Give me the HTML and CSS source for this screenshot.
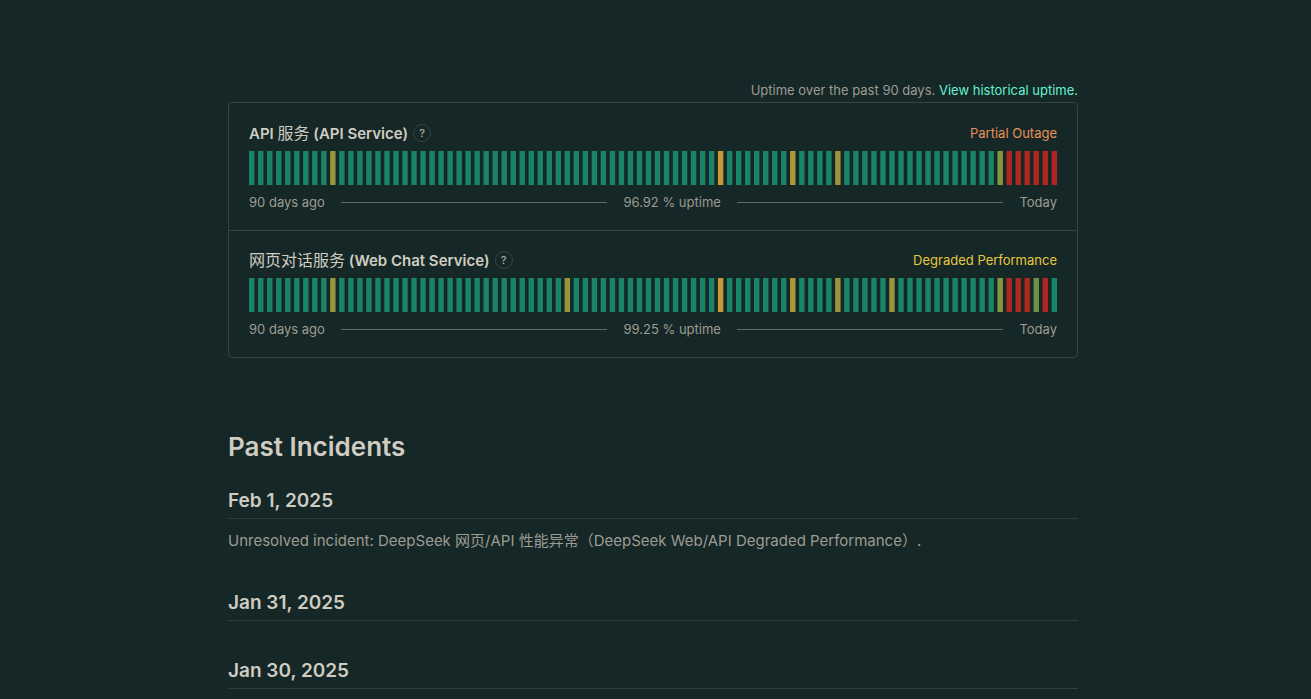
FILE: index.html
```html
<!DOCTYPE html>
<html lang="en">
<head>
<meta charset="utf-8">
<title>Service Status</title>
<link rel="stylesheet" href="styles.css">
</head>
<body>
<main class="container">
  <p class="uptime-note">Uptime over the past 90 days. <a href="#history">View historical uptime.</a></p>
  <section class="components">
    <article class="component">
      <div class="component-head">
        <h2 class="name">API <span class="cjk">服务</span> (API Service)</h2>
        <button class="help" type="button" aria-label="About API Service">?</button>
        <span class="status status-partial">Partial Outage</span>
      </div>
      <svg class="bars" viewBox="0 0 448 34" preserveAspectRatio="none" role="img" aria-label="API Service uptime" data-days="9:olive 52:amber 60:gold 65:olive 83:lime 84:red 85:red 86:red 87:red 88:red 89:red"></svg>
      <div class="legend"><span>90 days ago</span><i class="rule"></i><span>96.92 % uptime</span><i class="rule"></i><span>Today</span></div>
    </article>
    <article class="component">
      <div class="component-head">
        <h2 class="name"><span class="cjk">网页对话服务</span> (Web Chat Service)</h2>
        <button class="help" type="button" aria-label="About Web Chat Service">?</button>
        <span class="status status-degraded">Degraded Performance</span>
      </div>
      <svg class="bars" viewBox="0 0 448 34" preserveAspectRatio="none" role="img" aria-label="Web Chat Service uptime" data-days="9:olive 35:olive 52:amber 60:gold 65:olive 71:olive 83:lime 84:red 85:red 86:red 87:moss 88:red"></svg>
      <div class="legend"><span>90 days ago</span><i class="rule"></i><span>99.25 % uptime</span><i class="rule"></i><span>Today</span></div>
    </article>
  </section>

  <section class="incidents">
    <h1 class="incidents-title">Past Incidents</h1>
    <article class="day">
      <h3 class="date">Feb 1, 2025</h3>
      <p class="message">Unresolved incident: DeepSeek 网页/API 性能异常（DeepSeek Web/API Degraded Performance）.</p>
    </article>
    <article class="day"><h3 class="date">Jan 31, 2025</h3></article>
    <article class="day"><h3 class="date">Jan 30, 2025</h3></article>
  </section>
</main>
<script src="bars.js"></script>
</body>
</html>
```
FILE: styles.css
```css
* { box-sizing: border-box; }

body {
  margin: 0;
  padding: 80px 5px 0 0;
  overflow: hidden;
  background: #152726;
  color: #9d9c93;
  font-family: "Inter", "Noto Sans CJK SC", sans-serif;
  font-size: 13px;
}

h1, h2, h3, p { margin: 0; }

.container { max-width: 850px; margin: 0 auto; }

.uptime-note { padding-bottom: 2px; text-align: right; line-height: 20px; }
.uptime-note a { color: #65f2cf; text-decoration: none; }

.components { border: 1px solid #36443f; border-radius: 4px; }
.component { padding: 20px 20px 18px; }
.component + .component { padding-top: 19px; border-top: 1px solid #36443f; }

.component-head { display: flex; align-items: center; height: 20px; margin-bottom: 8px; }
.name { color: #cfccc1; font-size: 15px; font-weight: 600; line-height: 20px; }
.cjk { font-size: 16px; font-weight: 400; }

.help {
  width: 18px;
  height: 18px;
  margin-left: 5px;
  padding: 0;
  border: 1px solid #34443f;
  border-radius: 50%;
  background: transparent;
  color: #aaa99f;
  font: 500 11px/16px "Inter", sans-serif;
}

.status { margin-left: auto; }
.status-partial { color: #e8915a; }
.status-degraded { color: #e6c840; }

.bars { display: block; width: 100%; height: 34px; fill: #1a8468; }
.olive { fill: #98963a; }
.amber { fill: #c09c34; }
.gold { fill: #a99a38; }
.lime { fill: #88943e; }
.moss { fill: #6b9148; }
.red { fill: #ae2721; }

.legend { display: flex; align-items: center; gap: 16px; margin-top: 8px; line-height: 19px; }
.rule { flex: 1; height: 1px; background: #5e6963; }

.incidents { padding-top: 70px; }
.incidents-title { color: #cfccc1; font-size: 26px; font-weight: 600; line-height: 38px; }
.day { padding-top: 20px; margin-bottom: 15px; }
.date { padding-bottom: 3px; border-bottom: 1px solid #2f403c; color: #cfccc1; font-size: 19px; font-weight: 600; line-height: 29px; }
.message { padding-top: 10px; font-size: 15px; line-height: 24px; }
```
FILE: bars.js
```js
document.querySelectorAll(".bars").forEach(function (chart) {
  var marked = {};
  chart.dataset.days.split(" ").forEach(function (entry) {
    var parts = entry.split(":");
    marked[parts[0]] = parts[1];
  });
  for (var day = 0; day < 90; day++) {
    var bar = document.createElementNS("http://www.w3.org/2000/svg", "rect");
    bar.setAttribute("x", day * 5);
    bar.setAttribute("width", 3);
    bar.setAttribute("height", 34);
    if (marked[day]) bar.setAttribute("class", marked[day]);
    chart.appendChild(bar);
  }
});
```
